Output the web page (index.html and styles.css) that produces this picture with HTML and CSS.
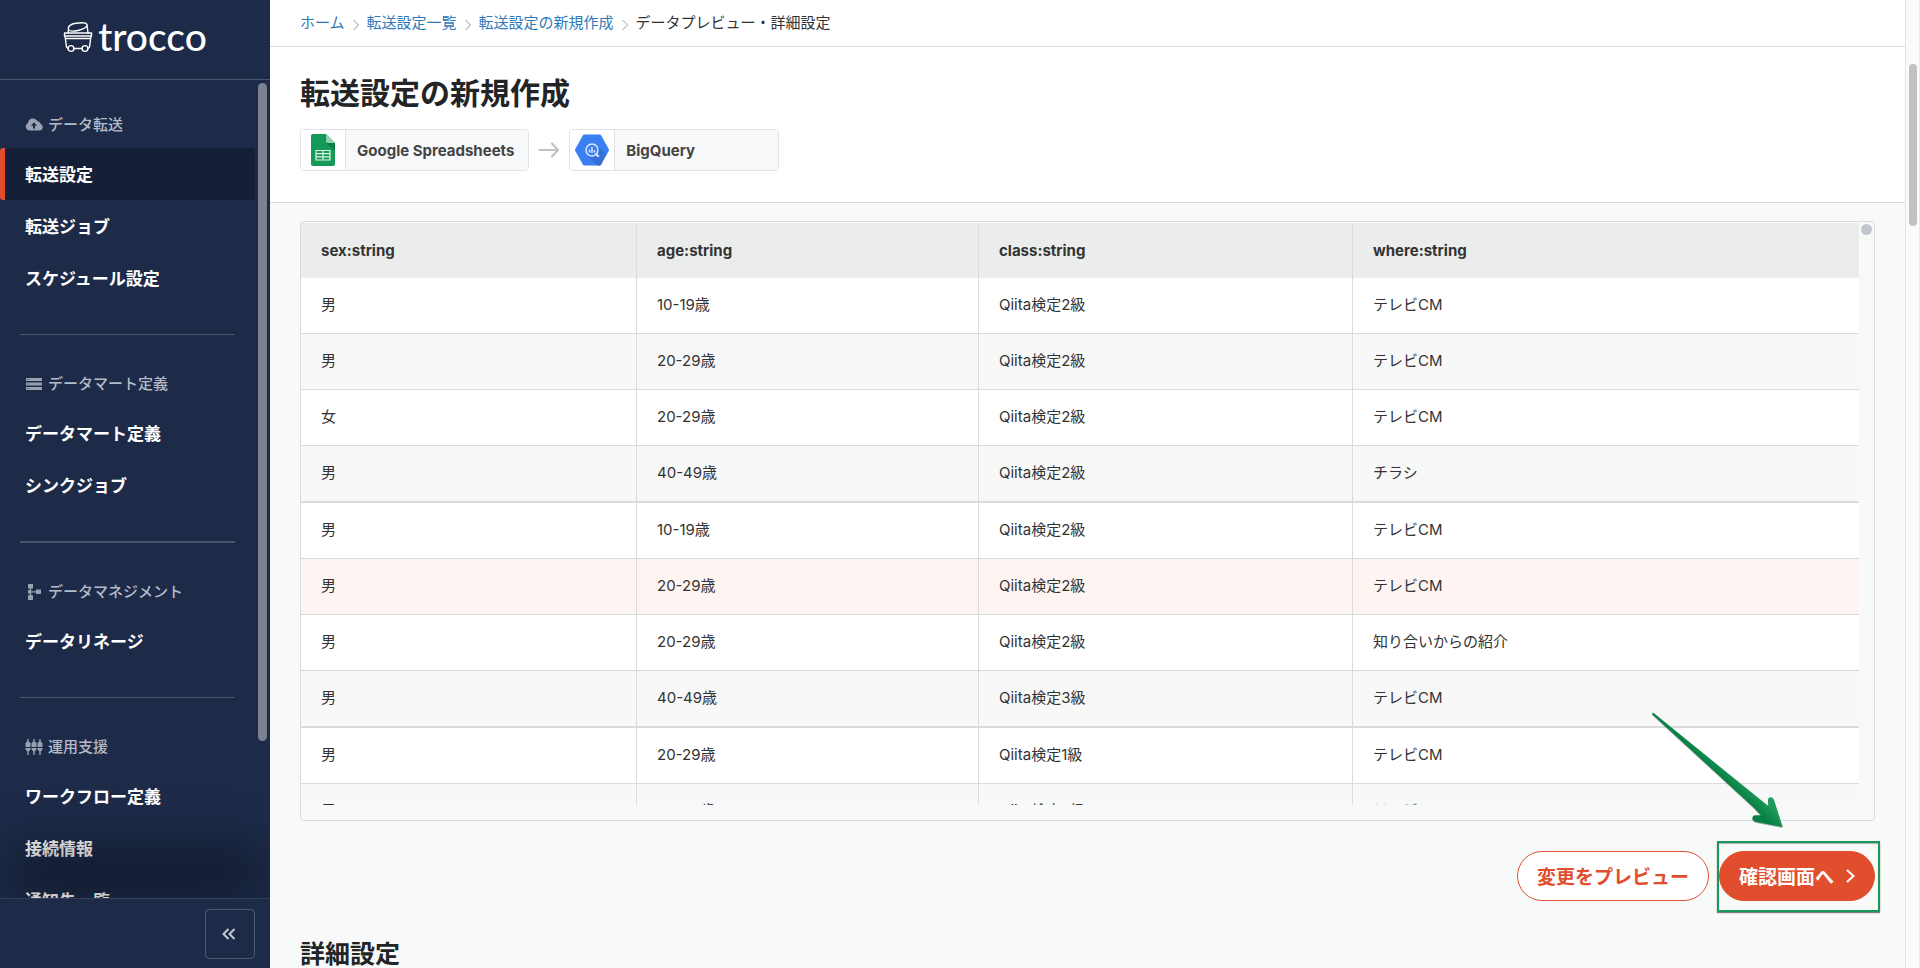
FILE: index.html
```html
<!DOCTYPE html>
<html lang="ja">
<head>
<meta charset="UTF-8">
<meta name="viewport" content="width=device-width, initial-scale=1.0">
<title>転送設定の新規作成 | trocco</title>
<link rel="stylesheet" href="styles.css">
</head>
<body>
    <aside class="sidebar">
        <a class="logo" href="#">
            <svg width="30" height="32" viewBox="0 0 30 32" fill="none" stroke="#fff" stroke-width="1.4" stroke-linejoin="round" stroke-linecap="round">
                <path d="M5.500 8.500C4.500 5 8 3 13 2.300c5-.8 10-.8 11 1.200.6 2.200-3 4.600-8 5.700-4.500 1-9.500 1.300-10.500-.7zM5.500 8.500L5 12M24 3.500l1 8.500"/>
                <path d="M1.500 12h27v3h-27zM2 15l1.500 11 1.500 1.500M28 15l-1.500 11-1.500 1.500M11 27.500h8M2.500 17.500h25"/>
                <circle cx="8" cy="27.500" r="2.900"/>
                <circle cx="22" cy="27.500" r="2.900"/>
            </svg>
            <span>trocco</span>
        </a>

        <nav class="menu">
            <section class="menu-group">
                <h2 class="menu-title">
                    <svg width="18" height="14" viewBox="0 0 18 14"><path fill="currentColor" fill-rule="evenodd" d="M4.500 12.500A4 4 0 0 1 3 4.900 5 5 0 0 1 12.300 3 4 4 0 0 1 15.700 6a3.400 3.400 0 0 1-1 6.500zM8 10.500h2V7.800h2L9 4.300 6 7.800h2z"/></svg>
                    データ転送
                </h2>
                <a class="menu-item active" href="#">転送設定</a>
                <a class="menu-item" href="#">転送ジョブ</a>
                <a class="menu-item" href="#">スケジュール設定</a>
            </section>

            <section class="menu-group">
                <h2 class="menu-title">
                    <svg width="18" height="14" viewBox="0 0 18 14"><path fill="currentColor" fill-rule="evenodd" d="M1 1h16v3H1zM1 5.500h16v3H1zM1 10h16v3H1zM2.500 2v1h1V2zM2.500 6.500v1h1v-1zM2.500 11v1h1v-1z"/></svg>
                    データマート定義
                </h2>
                <a class="menu-item" href="#">データマート定義</a>
                <a class="menu-item" href="#">シンクジョブ</a>
            </section>

            <section class="menu-group">
                <h2 class="menu-title">
                    <svg width="18" height="16" viewBox="0 0 18 16"><path fill="currentColor" d="M3 0h5v4.500H6.200v2.700H11V5.500h5v4.500h-5V8.500H6.200v2.700H8V16H3v-4.800h1.800V9.500H3V6h1.800V4.500H3z"/></svg>
                    データマネジメント
                </h2>
                <a class="menu-item" href="#">データリネージ</a>
            </section>

            <section class="menu-group">
                <h2 class="menu-title">
                    <svg width="18" height="16" viewBox="0 0 18 16" fill="currentColor">
                        <path id="plug" d="M2.300 0h1.400v2.500L5.500 4v4H.5V4l1.800-1.500zM.5 9h5v1.500l-1.800 2V16H2.300v-3.500l-1.800-2z"/>
                        <use href="#plug" x="6"/>
                        <use href="#plug" x="12"/>
                    </svg>
                    運用支援
                </h2>
                <a class="menu-item" href="#">ワークフロー定義</a>
                <a class="menu-item" href="#">接続情報</a>
                <a class="menu-item" href="#">通知先一覧</a>
            </section>
            <div class="menu-scrollbar"></div>
        </nav>

        <div class="sidebar-footer">
            <button class="collapse" type="button" aria-label="メニューを閉じる">
                <svg width="14" height="12" viewBox="0 0 14 12" fill="none" stroke="currentColor" stroke-width="2"><path d="M6.500 1l-5 5 5 5M12.500 1l-5 5 5 5"/></svg>
            </button>
        </div>
    </aside>

    <main class="main">
        <nav class="breadcrumb">
            <a href="#">ホーム</a>
            <svg width="6" height="12" viewBox="0 0 6 12"><path d="M.5 1l5 5-5 5"/></svg>
            <a href="#">転送設定一覧</a>
            <svg width="6" height="12" viewBox="0 0 6 12"><path d="M.5 1l5 5-5 5"/></svg>
            <a href="#">転送設定の新規作成</a>
            <svg width="6" height="12" viewBox="0 0 6 12"><path d="M.5 1l5 5-5 5"/></svg>
            <span>データプレビュー・詳細設定</span>
        </nav>

        <header class="page-header">
            <h1>転送設定の新規作成</h1>
            <div class="connectors">
                <div class="connector">
                    <div class="connector-icon">
                        <svg width="24" height="32" viewBox="0 0 24 32">
                            <path fill="#159957" d="M2 0h13l9 9v21a2 2 0 0 1-2 2H2a2 2 0 0 1-2-2V2a2 2 0 0 1 2-2z"/>
                            <path fill="#0e7d46" d="M15 9h9v8z"/>
                            <path fill="#8ed1b1" d="M15 0l9 9h-7a2 2 0 0 1-2-2z"/>
                            <path fill="none" stroke="#dff3e8" stroke-width="1.200" d="M5 16.500h14v9.500H5zM5 19.700h14M5 22.800h14M12 16.500V26"/>
                        </svg>
                    </div>
                    <div class="connector-name">Google Spreadsheets</div>
                </div>
                <svg class="arrow" width="22" height="16" viewBox="0 0 22 16"><path fill="none" stroke="#c2c2c2" stroke-width="2.200" stroke-linecap="round" stroke-linejoin="round" d="M1.500 8h18M14 1.500L20 8l-6 6.500"/></svg>
                <div class="connector">
                    <div class="connector-icon">
                        <svg width="34" height="32" viewBox="0 0 34 32">
                            <path fill="#3b80f2" d="M9.500.5h15a2 2 0 0 1 1.700 1l7.500 13.500a2 2 0 0 1 0 2l-7.500 13.500a2 2 0 0 1-1.700 1h-15a2 2 0 0 1-1.700-1L.3 17a2 2 0 0 1 0-2L7.800 1.500a2 2 0 0 1 1.700-1z"/>
                            <path fill="#3470d8" d="M22 11.500l9 8.500-4.800 10.500a2 2 0 0 1-1.700 1H22l-8.500-9z"/>
                            <circle cx="17" cy="16" r="6" fill="#3b80f2" stroke="#dce8fd" stroke-width="1.500"/>
                            <path stroke="#dce8fd" stroke-width="1.500" d="M14.500 15.500v3M17 13v6M19.500 16v2.500"/>
                            <path stroke="#dce8fd" stroke-width="2" d="M20.500 19.500l3.300 3.300"/>
                        </svg>
                    </div>
                    <div class="connector-name">BigQuery</div>
                </div>
            </div>
        </header>

        <div class="content">
            <div class="preview">
                <div class="preview-scroll">
                    <table>
                        <colgroup>
                            <col class="col-sex">
                            <col class="col-age">
                            <col class="col-class">
                            <col>
                        </colgroup>
                        <thead>
                            <tr><th>sex:string</th><th>age:string</th><th>class:string</th><th>where:string</th></tr>
                        </thead>
                        <tbody>
                            <tr><td>男</td><td>10-19歳</td><td>Qiita検定2級</td><td>テレビCM</td></tr>
                            <tr><td>男</td><td>20-29歳</td><td>Qiita検定2級</td><td>テレビCM</td></tr>
                            <tr><td>女</td><td>20-29歳</td><td>Qiita検定2級</td><td>テレビCM</td></tr>
                            <tr><td>男</td><td>40-49歳</td><td>Qiita検定2級</td><td>チラシ</td></tr>
                            <tr><td>男</td><td>10-19歳</td><td>Qiita検定2級</td><td>テレビCM</td></tr>
                            <tr class="hovered"><td>男</td><td>20-29歳</td><td>Qiita検定2級</td><td>テレビCM</td></tr>
                            <tr><td>男</td><td>20-29歳</td><td>Qiita検定2級</td><td>知り合いからの紹介</td></tr>
                            <tr><td>男</td><td>40-49歳</td><td>Qiita検定3級</td><td>テレビCM</td></tr>
                            <tr><td>男</td><td>20-29歳</td><td>Qiita検定1級</td><td>テレビCM</td></tr>
                            <tr><td>男</td><td>20-29歳</td><td>Qiita検定2級</td><td>テレビCM</td></tr>
                        </tbody>
                    </table>
                </div>
                <div class="preview-thumb"></div>
            </div>

            <div class="actions">
                <button class="btn" type="button">変更をプレビュー</button>
                <div class="confirm">
                    <button class="btn btn-primary" type="button">
                        確認画面へ
                        <svg width="10" height="14" viewBox="0 0 10 14" fill="none" stroke="currentColor" stroke-width="2"><path d="M2 1l6.500 6L2 13"/></svg>
                    </button>
                    <div class="highlight"></div>
                    <svg class="pointer" width="135" height="120" viewBox="0 0 405 360">
                        <defs>
                            <linearGradient id="green" gradientUnits="userSpaceOnUse" x1="220" y1="210" x2="248" y2="180">
                                <stop offset="0" stop-color="#087f43"/>
                                <stop offset="1" stop-color="#1f9a5b"/>
                            </linearGradient>
                        </defs>
                        <path fill="url(#green)" d="M7 10Q8 7 12 10L355 288 354 273Q353 263 362 262 370 262 372 270L398 351 315 335Q306 332 307 323 309 315 317 316L333 316 310 292 8 14Q6 12 7 10z"/>
                    </svg>
                </div>
            </div>

            <h2 class="section-title">詳細設定</h2>
        </div>
    </main>

    <div class="page-scrollbar"><div class="page-thumb"></div></div>
</body>
</html>
```
FILE: styles.css
```css
* {
    box-sizing: border-box;
}

body {
    margin: 0;
    height: 100vh;
    display: flex;
    overflow: hidden;
    font-family: Inter, "Noto Sans CJK JP", sans-serif;
    font-size: 15px;
    color: #333;
    background-color: #f8faf9;
}

h1, h2 {
    margin: 0;
}

a {
    text-decoration: none;
}

button {
    font-family: inherit;
    cursor: pointer;
}

/* sidebar */
.sidebar {
    width: 270px;
    flex-shrink: 0;
    display: flex;
    flex-direction: column;
    background-color: #1d2b49;
}

.logo {
    height: 80px;
    flex-shrink: 0;
    display: flex;
    align-items: center;
    justify-content: center;
    gap: 5px;
    padding-bottom: 6px;
    border-bottom: 1px solid #48566f;
    color: #fff;
    font-family: Lato, sans-serif;
    font-size: 39px;
    font-weight: 500;
    line-height: 40px;
}

.logo span {
    padding-bottom: 2px;
}

.menu {
    flex: 1;
    min-height: 0;
    position: relative;
    overflow: hidden;
}

.menu-group {
    padding: 26px 15px 30px 0;
}

.menu-group:first-child {
    padding-top: 22px;
}

.menu-group:not(:first-child)::before {
    content: "";
    display: block;
    margin: -26px 20px 26px;
    border-top: 1px solid #4a556d;
}

.menu-group:nth-child(3)::before {
    border-top-width: 2px;
}

.menu-title {
    height: 46px;
    display: flex;
    align-items: center;
    gap: 5px;
    padding: 0 0 3px 25px;
    font-size: 15px;
    font-weight: 500;
    color: #b4bac6;
}

.menu-title svg {
    margin-top: 3px;
    color: #9aa2b1;
}

.menu-item {
    height: 52px;
    display: flex;
    align-items: center;
    padding: 0 0 2px 25px;
    font-size: 17px;
    font-weight: 700;
    color: #fff;
}

.menu-item.active {
    padding-left: 20px;
    border-left: 5px solid #e04e2d;
    border-radius: 3px 0 0 3px;
    background-color: #151f35;
}

.menu-scrollbar {
    position: absolute;
    top: 3px;
    right: 3px;
    width: 9px;
    height: 658px;
    border-radius: 5px;
    background-color: #7a8292;
}

.sidebar-footer {
    position: relative;
    height: 70px;
    flex-shrink: 0;
    display: flex;
    justify-content: flex-end;
    align-items: center;
    padding-right: 15px;
    border-top: 1px solid #34415c;
    background-color: #1d2b49;
    box-shadow: 0 -60px 50px -8px rgba(0, 0, 0, 0.36);
    clip-path: inset(-120px 0 0 0);
}

.collapse {
    width: 50px;
    height: 50px;
    display: flex;
    align-items: center;
    justify-content: center;
    padding: 0 2px 0 0;
    border: 1px solid #4d5a72;
    border-radius: 4px;
    background: none;
    color: #c3c8d1;
}

/* main */
.main {
    flex: 1;
    min-width: 0;
    overflow: hidden;
}

.breadcrumb {
    height: 47px;
    display: flex;
    align-items: center;
    gap: 8px;
    padding: 0 30px 4px;
    border-bottom: 1px solid #d9dbdb;
    background-color: #fff;
}

.breadcrumb a {
    color: #2f7ab8;
}

.breadcrumb svg {
    margin-top: 8px;
    fill: none;
    stroke: #999;
}

.page-header {
    padding: 26px 30px 31px;
    border-bottom: 1px solid #d9dbdb;
    background-color: #fff;
}

.page-header h1 {
    margin-bottom: 16px;
    font-size: 30px;
    line-height: 40px;
    font-weight: 700;
    color: #222426;
}

.connectors {
    display: flex;
    align-items: center;
    gap: 9px;
}

.connector {
    min-width: 210px;
    height: 42px;
    display: flex;
    border: 1px solid #e0e2e5;
    border-radius: 4px;
    overflow: hidden;
}

.connector-icon {
    width: 45px;
    display: flex;
    align-items: center;
    justify-content: center;
    border-right: 1px solid #e0e2e5;
    background-color: #fff;
}

.connector-name {
    flex: 1;
    padding: 0 14px 0 11px;
    font-size: 15px;
    line-height: 42px;
    font-weight: 700;
    color: #444;
    background-color: #f8f9fb;
}

.content {
    padding: 18px 30px 0;
}

/* data preview */
.preview {
    position: relative;
    height: 600px;
    padding: 1px 15px 15px 0;
    border: 1px solid #dadcdc;
    border-radius: 4px;
}

.preview-scroll {
    height: 100%;
    overflow: hidden;
}

.preview-thumb {
    position: absolute;
    top: 2px;
    right: 2px;
    width: 11px;
    height: 11px;
    border-radius: 50%;
    background-color: #c0c5cf;
}

table {
    width: 100%;
    table-layout: fixed;
    border-collapse: separate;
    border-spacing: 0;
}

.col-sex {
    width: 336px;
}

.col-age {
    width: 342px;
}

.col-class {
    width: 374px;
}

th, td {
    height: 56px;
    padding: 0 20px;
    border-right: 1px solid #dadcdc;
    text-align: left;
}

th:last-child, td:last-child {
    border-right: none;
}

th {
    height: 55px;
    font-weight: 700;
    background-color: #ebedec;
}

td {
    padding-bottom: 4px;
    border-bottom: 1px solid #dadcdc;
    background-color: #fff;
}

tbody tr:nth-child(even) td {
    background-color: #f8f8f8;
}

tbody tr:nth-child(4n) td {
    height: 57px;
    border-bottom-width: 2px;
}

tbody tr.hovered td {
    background-color: #fef5f2;
}

/* buttons */
.actions {
    display: flex;
    justify-content: flex-end;
    gap: 10px;
    margin-top: 30px;
}

.btn {
    height: 50px;
    display: flex;
    align-items: center;
    gap: 11px;
    padding: 0 19px 2px;
    border: 1px solid #e04e2d;
    border-radius: 25px;
    font-size: 19px;
    font-weight: 700;
    color: #e04e2d;
    background-color: #fff;
}

.btn-primary {
    color: #fff;
    background-color: #e04e2d;
}

.btn-primary svg {
    margin-top: 2px;
}

.confirm {
    position: relative;
}

.highlight {
    position: absolute;
    inset: -10px -5px -11px -2px;
    border: 2px solid #1b975b;
    box-shadow: 0 1px 1px rgba(0, 0, 0, 0.5), inset 0 1px 1px rgba(0, 0, 0, 0.3);
    pointer-events: none;
}

.pointer {
    position: absolute;
    top: -141px;
    right: 90px;
    filter: drop-shadow(0 1px 0 rgba(0, 0, 0, 0.3));
    pointer-events: none;
}

.section-title {
    margin-top: 34px;
    font-size: 25px;
    line-height: 38px;
    color: #222426;
}

/* page scrollbar */
.page-scrollbar {
    width: 15px;
    flex-shrink: 0;
    padding: 64px 2px 0 3px;
    border-left: 1px solid #e4e4e4;
    border-right: 1px solid #ececec;
    background-color: #fafafa;
}

.page-thumb {
    height: 162px;
    border-radius: 4px;
    background-color: #c1c1c1;
}
```
